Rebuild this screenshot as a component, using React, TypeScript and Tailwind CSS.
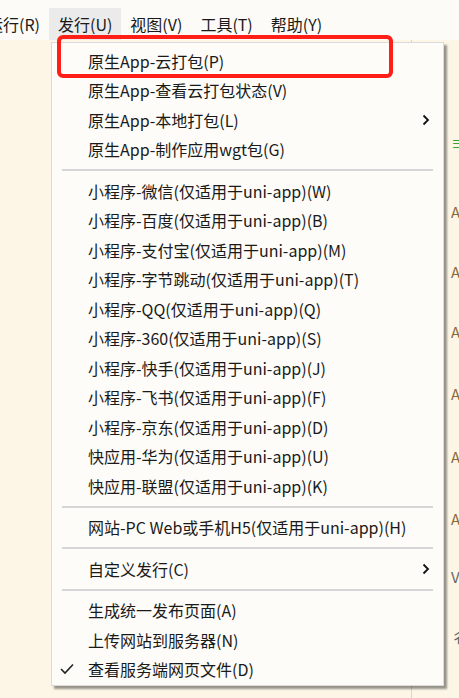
import type { ReactNode } from 'react';

type Entry =
  | { kind: 'item'; label: string; sub?: boolean; checked?: boolean }
  | { kind: 'sep' };

const entries: Entry[] = [
  { kind: 'item', label: '原生App-云打包(P)' },
  { kind: 'item', label: '原生App-查看云打包状态(V)' },
  { kind: 'item', label: '原生App-本地打包(L)', sub: true },
  { kind: 'item', label: '原生App-制作应用wgt包(G)' },
  { kind: 'sep' },
  { kind: 'item', label: '小程序-微信(仅适用于uni-app)(W)' },
  { kind: 'item', label: '小程序-百度(仅适用于uni-app)(B)' },
  { kind: 'item', label: '小程序-支付宝(仅适用于uni-app)(M)' },
  { kind: 'item', label: '小程序-字节跳动(仅适用于uni-app)(T)' },
  { kind: 'item', label: '小程序-QQ(仅适用于uni-app)(Q)' },
  { kind: 'item', label: '小程序-360(仅适用于uni-app)(S)' },
  { kind: 'item', label: '小程序-快手(仅适用于uni-app)(J)' },
  { kind: 'item', label: '小程序-飞书(仅适用于uni-app)(F)' },
  { kind: 'item', label: '小程序-京东(仅适用于uni-app)(D)' },
  { kind: 'item', label: '快应用-华为(仅适用于uni-app)(U)' },
  { kind: 'item', label: '快应用-联盟(仅适用于uni-app)(K)' },
  { kind: 'sep' },
  { kind: 'item', label: '网站-PC Web或手机H5(仅适用于uni-app)(H)' },
  { kind: 'sep' },
  { kind: 'item', label: '自定义发行(C)', sub: true },
  { kind: 'sep' },
  { kind: 'item', label: '生成统一发布页面(A)' },
  { kind: 'item', label: '上传网站到服务器(N)' },
  { kind: 'item', label: '查看服务端网页文件(D)', checked: true },
];

const menus = [
  { label: '运行(R)' },
  { label: '发行(U)', active: true },
  { label: '视图(V)' },
  { label: '工具(T)' },
  { label: '帮助(Y)' },
];

// editor text that peeks out to the right of the dropdown (gap = space above the line)
const editorLines: { gap: string; text: ReactNode }[] = [
  { gap: 'mt-[95px]', text: <span className="text-[#3aa23a]">≡</span> },
  { gap: 'mt-[54px]', text: <span className="text-[#8a6a3a]">A</span> },
  { gap: 'mt-[45px]', text: <span className="text-[#8a6a3a]">A</span> },
  { gap: 'mt-[45px]', text: <span className="text-[#8a6a3a]">A</span> },
  { gap: 'mt-[47px]', text: <span className="text-[#8a6a3a]">A</span> },
  { gap: 'mt-[48px]', text: <span className="text-[#8a6a3a]">A</span> },
  { gap: 'mt-[47px]', text: <span className="text-[#8a6a3a]">A</span> },
  { gap: 'mt-[43px]', text: <span className="text-[#666]">V</span> },
  { gap: 'mt-[45px]', text: <span className="text-[#666]">彳</span> },
];

function Chevron() {
  return (
    <svg width="8" height="12" viewBox="0 0 8 12" className="ml-auto mr-[13px]">
      <path d="M1.5 1.5 L6 6 L1.5 10.5" fill="none" stroke="#111" strokeWidth="1.8" />
    </svg>
  );
}

function Check() {
  return (
    <svg width="14" height="12" viewBox="0 0 14 12" className="w-[14px] ml-[8px] mr-[14px]">
      <path d="M1 6 L5 10 L13 1.5" fill="none" stroke="#222" strokeWidth="1.6" />
    </svg>
  );
}

export default function App() {
  return (
    <div
      className="relative w-[459px] h-[698px] overflow-hidden bg-[#fdf6e6] text-[#1a1a1a] flex flex-col"
      style={{ fontFamily: '"Noto Sans CJK SC", "Noto Sans", sans-serif' }}
    >
      {/* menu bar */}
      <div className="h-[40px] shrink-0 pt-[8px] bg-[#fcfbf7] flex">
        {menus.map((m, i) => (
          <div
            key={m.label}
            className={
              'h-[32px] px-[9px] flex items-center text-[16px] leading-none whitespace-nowrap ' +
              (i === 0 ? '-ml-[22px] ' : '') +
              (m.active ? 'bg-[#ebebeb]' : '')
            }
          >
            {m.label}
          </div>
        ))}
      </div>

      {/* editor area */}
      <div className="flex-1 flex">
        <div className="w-[412px] shrink-0 border-r border-[#e6d6ab]" />
        <div className="flex-1 flex flex-col pl-[39px] text-[15px] leading-none">
          {editorLines.map((l, i) => (
            <div key={i} className={l.gap}>
              {l.text}
            </div>
          ))}
        </div>
      </div>

      {/* dropdown */}
      <div className="absolute left-[51px] top-[42px] w-[393px] border border-[#dadada] bg-[#fdfcf8] pt-[3px] pb-[1px] shadow-[3px_3px_2px_rgba(0,0,0,0.4)]">
        {entries.map((e, i) =>
          e.kind === 'sep' ? (
            <div key={i} className="h-[12px] flex items-center px-[10px]">
              <div className="h-[2px] w-full bg-[#d6d6d6]" />
            </div>
          ) : (
            <div
              key={i}
              className={
                'h-[29.5px] flex items-center text-[16px] leading-none whitespace-nowrap ' +
                (e.checked ? '' : 'pl-[36px]')
              }
            >
              {e.checked && <Check />}
              <span>{e.label}</span>
              {e.sub && <Chevron />}
            </div>
          )
        )}
      </div>

      {/* red highlight frame */}
      <div className="absolute left-[57px] top-[35px] w-[336px] h-[43px] rounded-[6px] border-4 border-[#ff1f17]" />
    </div>
  );
}
